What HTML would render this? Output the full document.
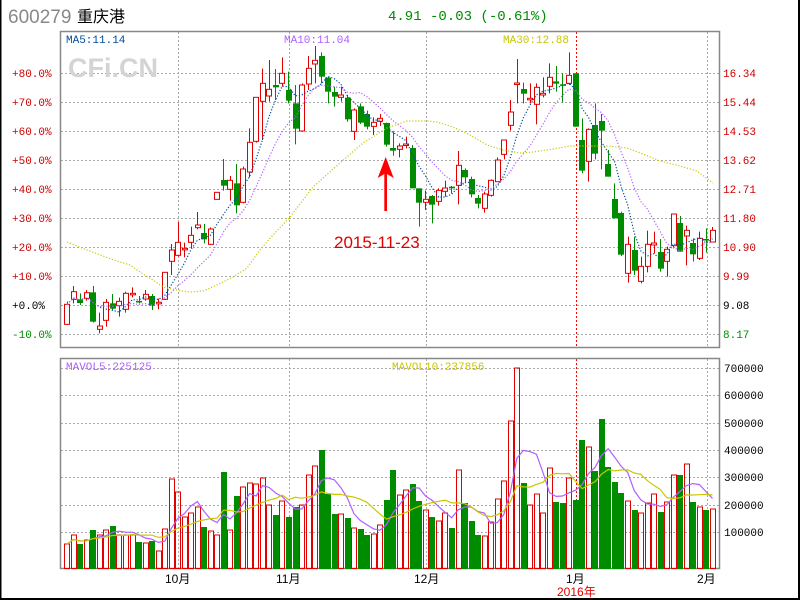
<!DOCTYPE html>
<html><head><meta charset="utf-8">
<style>
html,body{margin:0;padding:0;background:#fff;}
body{width:800px;height:600px;overflow:hidden;position:relative;font-family:"Liberation Sans","Noto Sans CJK SC",sans-serif;}
svg{position:absolute;left:0;top:0;}
.m{font-family:"Liberation Mono","Noto Sans CJK SC",monospace;}
</style></head><body>
<svg id="s" width="800" height="600" xmlns="http://www.w3.org/2000/svg">
<rect x="0.5" y="-2" width="798.5" height="601" fill="none" stroke="#000" stroke-width="2"/>
<g id="grid"></g>
<text x="8" y="23" font-size="19" fill="#888" font-family="Liberation Sans, sans-serif">600279</text>
<text x="77" y="22" font-size="16" fill="#000" font-family="Liberation Sans, Noto Sans CJK SC, sans-serif">重庆港</text>
<text x="388" y="20" font-size="14" fill="#008c00" class="m" font-family="Liberation Mono, monospace">4.91 -0.03 (-0.61%)</text>
<text x="68" y="77" font-size="27" font-weight="bold" fill="#d4d4d4" font-family="Liberation Sans, sans-serif">CFi.CN</text>
<g font-family="Liberation Mono, monospace" font-size="11">
<text x="66" y="43" fill="#004c9c">MA5:11.14</text>
<text x="284" y="43" fill="#b060ff">MA10:11.04</text>
<text x="503" y="43" fill="#c8c800">MA30:12.88</text>
<text x="66" y="370" fill="#b060ff">MAVOL5:225125</text>
<text x="392" y="370" fill="#c8c800">MAVOL10:237856</text>
</g>
<g font-family="Liberation Mono, monospace" font-size="11" fill="#d00000">
<text x="12" y="77">+80.0%</text><text x="12" y="106">+70.0%</text><text x="12" y="135">+60.0%</text>
<text x="12" y="164">+50.0%</text><text x="12" y="193">+40.0%</text><text x="12" y="222">+30.0%</text>
<text x="12" y="251">+20.0%</text><text x="12" y="280">+10.0%</text><text x="12" y="309" fill="#000">+0.0%</text>
<text x="12" y="338" fill="#008c00">-10.0%</text>
<text x="723" y="77">16.34</text><text x="723" y="106">15.44</text><text x="723" y="135">14.53</text>
<text x="723" y="164">13.62</text><text x="723" y="193">12.71</text><text x="723" y="222">11.80</text>
<text x="723" y="251">10.90</text><text x="723" y="280">9.99</text><text x="723" y="309" fill="#000">9.08</text>
<text x="723" y="338" fill="#008c00">8.17</text>
</g>
<g font-family="Liberation Mono, monospace" font-size="11" fill="#000">
<text x="724" y="372">700000</text><text x="724" y="399">600000</text><text x="724" y="427">500000</text>
<text x="724" y="454">400000</text><text x="724" y="481">300000</text><text x="724" y="509">200000</text>
<text x="724" y="536">100000</text>
</g>
<g font-family="Liberation Sans, Noto Sans CJK SC, sans-serif" font-size="12" fill="#000">
<text x="165" y="583">10月</text><text x="276" y="583">11月</text><text x="414" y="583">12月</text>
<text x="566" y="583">1月</text><text x="697" y="583">2月</text>
<text x="557" y="596" fill="#e00000">2016年</text>
</g>
<g id="chart"></g>
<path d="M385.7 157 L393.7 178 L387 174 L387 211 L384.3 211 L384.3 174 L377.7 178 Z" fill="#f00"/>
<text x="334" y="248" font-size="17" fill="#e00000" font-family="Liberation Sans, sans-serif">2015-11-23</text>
</svg>
<script>
var NS="http://www.w3.org/2000/svg";
function el(p,t,a){var e=document.createElementNS(NS,t);for(var k in a)e.setAttribute(k,a[k]);p.appendChild(e);return e;}
var G=document.getElementById('grid'),H=document.getElementById('chart');
var dot={stroke:"#a8a8a8","stroke-width":1,"stroke-dasharray":"2 2",fill:"none"};
[73,102,131,160,189,218,247,276,305,334].forEach(function(y){el(G,'line',Object.assign({x1:61,x2:719,y1:y+.5,y2:y+.5},dot));});
[368,395,423,450,477,505,532].forEach(function(y){el(G,'line',Object.assign({x1:61,x2:719,y1:y+.5,y2:y+.5},dot));});
[178.5,289.5,426.5,707.5].forEach(function(x){el(G,'line',Object.assign({x1:x,x2:x,y1:32,y2:347},dot));el(G,'line',Object.assign({x1:x,x2:x,y1:359,y2:568},dot));});
el(G,'line',{x1:576.5,x2:576.5,y1:32,y2:347,stroke:"#f00","stroke-dasharray":"2 2"});
el(G,'line',{x1:576.5,x2:576.5,y1:359,y2:568,stroke:"#f00","stroke-dasharray":"2 2"});
el(G,'rect',{x:60.5,y:31.5,width:659,height:316,fill:"none",stroke:"#888","stroke-width":1.5});
el(G,'rect',{x:60.5,y:358.5,width:659,height:210,fill:"none",stroke:"#888","stroke-width":1.5});
var C=[
['r',793,853,785,855],['r',755,778,738,790],['g',778,789,760,795],['r',758,775,750,782],['g',757,845,738,848],
['r',858,868,818,880],['r',787,841,777,860],['g',790,806,762,812],['r',784,797,773,830],['r',760,808,755,818],
['r',760,762,742,772],['g',783,786,768,790],['r',763,777,750,782],['g',768,797,762,810],['r',787,791,776,808],
['r',697,778,697,780],['r',630,664,612,705],['r',607,646,546,650],['r',625,629,608,652],['r',586,607,560,625],
['r',555,563,516,568],['g',579,598,552,610],['r',567,613,562,615],['r',457,478,457,478],['g',420,437,357,452],
['r',421,448,408,482],['g',430,496,372,520],['r',387,487,380,490],['r',307,396,265,412],['r',172,304,172,308],
['r',130,184,86,300],['r',148,168,60,185],['g',135,142,87,180],['r',100,130,52,140],['g',150,182,95,190],
['g',190,266,135,313],['r',135,273,130,275],['r',85,132,48,150],['r',61,72,18,130],['g',48,110,37,130],
['g',113,155,110,190],['g',156,170,140,200],['r',165,172,140,185],['g',173,238,165,245],['r',210,274,205,300],
['g',199,248,190,252],['g',222,260,212,268],['r',247,259,232,285],['r',235,244,222,258],['g',249,314,248,320],
['g',324,332,275,347],['r',318,328,310,352],['r',312,314,290,325],['g',324,445,315,445],['g',445,488,445,560],
['r',478,487,452,510],['g',468,494,465,550],['r',451,484,445,497],['r',444,454,422,470],['g',440,445,438,460],
['r',376,436,333,493],['g',390,412,385,430],['g',417,463,410,472],['g',474,491,465,505],['r',462,505,455,518],
['r',421,466,418,470],['r',360,425,352,426],['r',300,343,300,358],['r',216,256,180,272],['r',129,131,57,190],
['g',147,161,128,190],['r',175,177,130,190],['r',142,193,130,253],['r',160,165,112,172],['r',112,139,70,160],
['g',124,131,78,155],['g',133,134,100,187],['r',106,130,37,135],['g',100,260,100,260],['g',300,392,235,400],
['r',268,364,265,425],['g',255,341,190,358],['g',243,272,222,388],['g',372,410,330,410],['g',477,535,430,535],
['g',519,644,515,648],['r',613,700,590,728],['g',630,692,590,705],['r',679,724,650,730],['r',613,679,572,697],
['r',609,615,575,640],['g',636,686,597,695],['r',628,664,620,710],['r',522,617,522,625],['g',549,635,528,635],
['r',571,588,557,676],['g',609,643,595,665],['r',595,655,575,660],['g',597,599,565,638],['r',571,606,561,606]];
var V=[['r',544],['r',535],['g',544],['r',540],['g',530],['r',535],['r',530],['g',526],['r',535],['r',535],
['r',535],['g',542],['r',543],['g',541],['r',551],['r',529],['r',479],['r',492],['r',517],['r',513],
['r',507],['g',527],['r',531],['r',535],['g',472],['r',530],['g',496],['r',487],['r',483],['r',484],
['r',478],['r',505],['g',515],['r',501],['g',517],['g',507],['r',505],['r',475],['r',466],['g',450],
['g',494],['g',514],['r',514],['g',518],['r',528],['g',529],['g',535],['r',534],['r',525],['g',500],
['g',470],['r',495],['r',490],['g',484],['g',501],['r',510],['g',517],['r',521],['r',513],['g',528],
['r',470],['g',503],['g',521],['g',535],['r',536],['r',522],['r',499],['r',481],['r',421],['r',368],
['g',483],['r',505],['r',494],['r',513],['r',468],['g',502],['g',503],['r',478],['g',500],['g',440],
['r',447],['g',471],['g',419],['g',467],['g',482],['g',493],['r',501],['g',510],['r',513],['r',503],
['r',494],['g',512],['r',502],['r',475],['g',475],['r',464],['g',502],['r',507],['g',510],['r',509]];
var RED="#e00000",GRN="#008c00";
function Y(z){return 40+z/3;}
var closes=[],vt=[];
C.forEach(function(c,i){
  var x=64.3+6.52*i,cx=Math.round(x+2.5)+.5;
  var t=Y(c[1]),b=Y(c[2]),h=Y(c[3]),l=Y(c[4]);
  if(b-t<1.5)b=t+1.5;
  var col=c[0]=='r'?RED:GRN;
  if(c[0]=='r'){
    el(H,'line',{x1:cx,x2:cx,y1:h,y2:t,stroke:col});
    el(H,'line',{x1:cx,x2:cx,y1:b,y2:l,stroke:col});
    el(H,'rect',{x:Math.round(x)+.5,y:t,width:5,height:b-t,fill:"#fff",stroke:col});
    closes.push(t);
  }else{
    el(H,'line',{x1:cx,x2:cx,y1:h,y2:l,stroke:col});
    el(H,'rect',{x:Math.round(x),y:t,width:6,height:b-t,fill:col});
    closes.push(b);
  }
});
V.forEach(function(v,i){
  var x=Math.round(64.3+6.52*i);
  if(v[0]=='r')el(H,'rect',{x:x+.5,y:v[1],width:5,height:568.5-v[1],fill:"none",stroke:RED});
  else el(H,'rect',{x:x,y:v[1],width:6,height:569-v[1],fill:GRN});
  vt.push(568.5-v[1]);
});
function ma(a,n){var r=[];for(var i=0;i<a.length;i++){var s=0,k=0;for(var j=Math.max(0,i-n+1);j<=i;j++){s+=a[j];k++;}r.push(s/k);}return r;}
function line(arr,col,dash,f){var p=arr.map(function(v,i){return (67+6.52*i).toFixed(1)+","+f(v).toFixed(1);}).join(" ");
 var a={points:p,fill:"none",stroke:col,"stroke-width":1.2};if(dash)a["stroke-dasharray"]=dash;el(H,'polyline',a);}
line(ma(closes,5),"#004c9c","1.2 1.8",function(v){return v;});
line(ma(closes,10),"#b060ff","1.2 1.8",function(v){return v;});
el(H,'polyline',{points:"67,242 87,250 103,256 117,261 130,265 140,272 153,280 163,287 177,290 190,292 203,291 217,285 233,277 247,268 260,250 273,235 290,217 313,187 340,163 363,143 387,128 407,121 427,121 437,122 453,127 470,135 487,145 503,150 520,153 533,152 553,149 570,146 607,146 627,148 643,154 660,161 680,166 697,171 713,183",fill:"none",stroke:"#c8c800","stroke-width":1.2,"stroke-dasharray":"1.2 1.8"});
line(ma(vt,5),"#b060ff",null,function(v){return 568.5-v;});
line(ma(vt,10),"#c8c800",null,function(v){return 568.5-v;});
</script>
</body></html>
